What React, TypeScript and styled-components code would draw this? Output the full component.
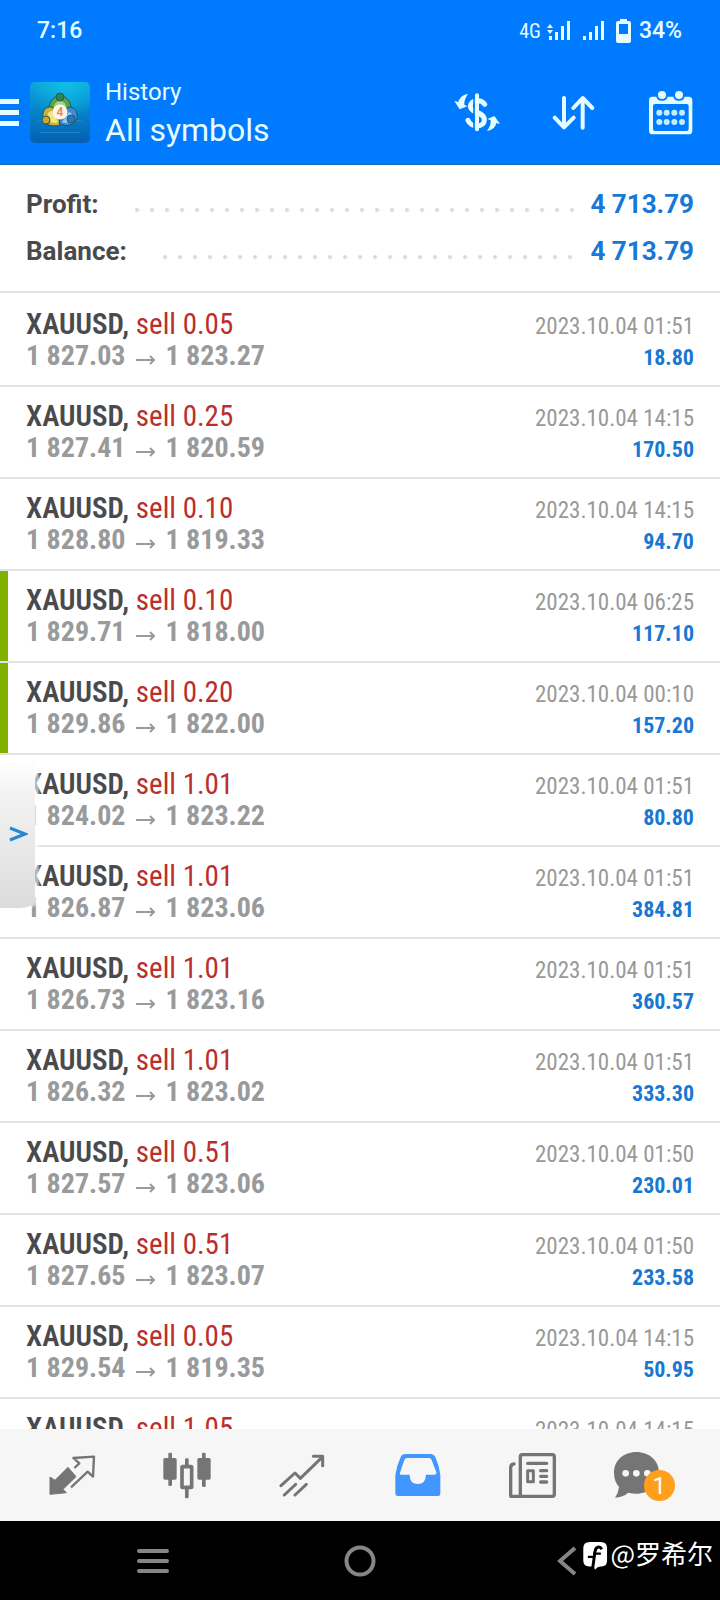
import React from "react";
import styled, { createGlobalStyle } from "styled-components";

const sans = `Roboto, "Liberation Sans", sans-serif`;
const condensed = `"Roboto Condensed", "Liberation Sans Narrow", Roboto, sans-serif`;
const blue = "#007aff";
const ice = "#e6fdff";
const grey = "#757575";

const GlobalStyle = createGlobalStyle`
  * { box-sizing: border-box; }
  html, body { margin: 0; padding: 0; background: #fff; }
  button { border: 0; padding: 0; margin: 0; background: none; color: inherit; font: inherit; cursor: pointer; }
  svg { display: block; }
`;

const Screen = styled.div`
  display: flex;
  flex-direction: column;
  height: 100vh;
  background: #fff;
  font-family: ${sans};
`;

const Top = styled.header`
  flex: none;
  background: ${blue};
  color: ${ice};
  border-bottom: 1px solid #1a67b8;
`;

const StatusBar = styled.div`
  display: flex;
  align-items: center;
  justify-content: space-between;
  height: 60px;
  padding: 2px 38px 0 37px;
  font-size: 23px;
  line-height: 28px;
  font-weight: 500;
`;

const StatusGroup = styled.div`
  display: flex;
  align-items: center;
`;

const Network = styled.span`
  font-family: ${condensed};
  font-size: 20px;
  line-height: 24px;
  font-weight: 400;
  margin-right: 6px;
`;

const StatusIcon = styled.svg<{ $gap: number }>`
  fill: currentColor;
  margin-right: ${(p) => p.$gap}px;
`;

const AppBar = styled.div`
  display: flex;
  align-items: center;
  height: 104px;
  padding-right: 1px;
`;

const MenuButton = styled.button`
  width: 19px;
  margin-right: 11px;
`;

const Titles = styled.div`
  flex: 1;
  display: flex;
  flex-direction: column;
  gap: 4px;
  margin-left: 15px;
`;

const Overline = styled.div`
  font-size: 24px;
  line-height: 32px;
`;

const Title = styled.h1`
  margin: 0;
  font-size: 32px;
  line-height: 36px;
  font-weight: 400;
`;

const ActionButton = styled.button`
  display: flex;
  align-items: center;
  justify-content: center;
  width: 97px;
  height: 72px;
`;

const Summary = styled.dl`
  flex: none;
  display: flex;
  flex-direction: column;
  gap: 15px;
  margin: 0;
  padding: 23px 26px 24px;
  border-bottom: 2px solid #e2e2e2;
  font-size: 26px;
  line-height: 32px;
  font-weight: 700;
`;

const SummaryRow = styled.div`
  display: flex;
`;

const SummaryLabel = styled.dt`
  color: #4a4a4c;
`;

const Leader = styled.span`
  flex: 1;
  margin: 0 12px 0 36px;
  background: radial-gradient(circle at 2px 2px, #d8d8d8 1px, rgba(216, 216, 216, 0) 3px) 0 20px / 15px 5px repeat-x;
`;

const SummaryValue = styled.dd`
  margin: 0;
  color: #1778d8;
`;

const HistoryPane = styled.main`
  position: relative;
  flex: 1;
  min-height: 0;
  overflow: hidden;
`;

const DealList = styled.ul`
  height: 100%;
  margin: 0;
  padding: 2px 0 0;
  list-style: none;
  overflow-y: auto;
  scrollbar-width: none;
  font-family: ${condensed};
`;

const Deal = styled.li<{ $marked?: boolean }>`
  height: 92px;
  padding: 13px 26px 0;
  border-bottom: 2px solid #e2e2e2;
  background: ${(p) => (p.$marked ? "linear-gradient(#80b000, #80b000) 0 0 / 8px 100% no-repeat" : "none")};
`;

const DealLine = styled.div`
  display: flex;
  align-items: baseline;
  justify-content: space-between;
  height: 32px;
  font-size: 29px;
  line-height: 32px;
`;

const Symbol = styled.span`
  color: #4a4a4c;
  font-weight: 600;
`;

const Side = styled.span`
  color: #b92f2d;
  font-weight: 400;
`;

const Prices = styled.span`
  display: flex;
  align-items: baseline;
  color: #999a9c;
  font-size: 28px;
  font-weight: 700;
`;

const Arrow = styled.svg`
  width: 20px;
  height: 10px;
  margin: 0 10px;
`;

const When = styled.time`
  color: #999;
  font-size: 23px;
  line-height: 28px;
`;

const Profit = styled.span`
  color: #1778d4;
  font-size: 22px;
  line-height: 28px;
  font-weight: 700;
`;

const Drawer = styled.button`
  position: absolute;
  left: 0;
  top: 467px;
  width: 35px;
  height: 148px;
  display: flex;
  align-items: center;
  padding-left: 9px;
  border-radius: 0 0 16px 0 / 0 0 6px 0;
  background: linear-gradient(#fff, #f4f4f4 20%, #dcdcde);
  box-shadow: 4px 0 2px rgba(255, 255, 255, 0.6);
`;

const TabBar = styled.nav`
  flex: none;
  display: flex;
  height: 92px;
  padding: 0 14px;
  background: #f6f6f6;
`;

const Tab = styled.button<{ $active?: boolean }>`
  flex: 1;
  display: flex;
  align-items: center;
  justify-content: center;
  color: ${(p) => (p.$active ? "#4296ff" : grey)};
`;

const ChatIcon = styled.span`
  position: relative;
  width: 69px;
  height: 48px;
`;

const Badge = styled.span`
  position: absolute;
  left: 30px;
  top: 19px;
  width: 31px;
  height: 31px;
  border-radius: 50%;
  background: #ff9f1c;
  color: #fff;
  font-size: 24px;
  line-height: 32px;
  text-align: center;
`;

const SystemBar = styled.footer`
  position: relative;
  flex: none;
  display: flex;
  height: 79px;
  padding: 0 50px;
  background: #000;
  color: #868686;
`;

const SystemButton = styled.button`
  flex: 1;
  display: flex;
  align-items: center;
  justify-content: center;
`;

const Watermark = styled.div`
  position: absolute;
  right: 7px;
  top: 14px;
  display: flex;
  align-items: center;
  gap: 2px;
  color: #fff;
  font-family: "Noto Sans CJK SC", sans-serif;
  font-size: 26px;
  line-height: 36px;

  svg {
    margin-top: 6px;
  }
`;

type DealData = {
  volume: string;
  open: string;
  close: string;
  time: string;
  profit: string;
  marked?: boolean;
};

const deals: DealData[] = [
  { volume: "0.05", open: "1 827.03", close: "1 823.27", time: "2023.10.04 01:51", profit: "18.80" },
  { volume: "0.25", open: "1 827.41", close: "1 820.59", time: "2023.10.04 14:15", profit: "170.50" },
  { volume: "0.10", open: "1 828.80", close: "1 819.33", time: "2023.10.04 14:15", profit: "94.70" },
  { volume: "0.10", open: "1 829.71", close: "1 818.00", time: "2023.10.04 06:25", profit: "117.10", marked: true },
  { volume: "0.20", open: "1 829.86", close: "1 822.00", time: "2023.10.04 00:10", profit: "157.20", marked: true },
  { volume: "1.01", open: "1 824.02", close: "1 823.22", time: "2023.10.04 01:51", profit: "80.80" },
  { volume: "1.01", open: "1 826.87", close: "1 823.06", time: "2023.10.04 01:51", profit: "384.81" },
  { volume: "1.01", open: "1 826.73", close: "1 823.16", time: "2023.10.04 01:51", profit: "360.57" },
  { volume: "1.01", open: "1 826.32", close: "1 823.02", time: "2023.10.04 01:51", profit: "333.30" },
  { volume: "0.51", open: "1 827.57", close: "1 823.06", time: "2023.10.04 01:50", profit: "230.01" },
  { volume: "0.51", open: "1 827.65", close: "1 823.07", time: "2023.10.04 01:50", profit: "233.58" },
  { volume: "0.05", open: "1 829.54", close: "1 819.35", time: "2023.10.04 14:15", profit: "50.95" },
];

const lastDeal = { volume: "1.05", time: "2023.10.04 14:15" };

const Logo = () => (
  <svg width="60" height="61" viewBox="0 0 60 61">
    <defs>
      <linearGradient id="sky" x1="0" y1="0" x2="0" y2="1">
        <stop offset="0" stopColor="#0aa6dc" />
        <stop offset="0.45" stopColor="#0586cb" />
        <stop offset="1" stopColor="#0560b2" />
      </linearGradient>
      <radialGradient id="glow" cx="0.6" cy="0" r="0.6">
        <stop offset="0" stopColor="#12bfe6" />
        <stop offset="1" stopColor="#12bfe6" stopOpacity="0" />
      </radialGradient>
    </defs>
    <rect width="60" height="61" rx="5" fill="url(#sky)" />
    <rect width="60" height="61" rx="5" fill="url(#glow)" />
    <path d="M10 50.500H50M8 38.500H52" stroke="#2c8fd0" strokeWidth="1" opacity="0.6" />
    <g stroke="#24556a" strokeWidth="1">
      <path d="M19 27C19 18 25 14 30 14S41 18 41 27L36 31H24Z" fill="#57a548" />
      <path d="M24 26C24 21 27 19 30 19S36 21 36 26" fill="#a5d978" stroke="none" />
      <path d="M22 25C14 24 12 31 13 36S20 46 30 43L29 35Z" fill="#c9b23a" />
      <path d="M22 29C17 29 17 35 19 38S25 42 28 40" fill="#f3e480" stroke="none" />
      <path d="M38 25C46 25 48 31 47 36S38 47 29 41L32 34Z" fill="#3e8cd0" />
      <path d="M39 30C43 31 43 35 41 38S35 42 32 40" fill="#8cc8f0" stroke="none" />
      <circle cx="30" cy="15" r="4" fill="#2f8840" />
      <circle cx="16" cy="38" r="4" fill="#d0a628" />
      <circle cx="41" cy="37" r="4" fill="#2a78c0" />
    </g>
    <circle cx="30" cy="30" r="7.500" fill="#fff5ec" />
    <text x="30" y="34" textAnchor="middle" fontFamily="Roboto, sans-serif" fontSize="12" fontWeight="700" fill="#ef8a4c">4</text>
  </svg>
);

const DollarIcon = () => (
  <svg width="48" height="41" viewBox="280 276 144 123" fill="none">
    <path d="M375 313C366 298 332 298 332 319C332 340 374 334 374 359C374 384 334 384 325 361" stroke={ice} strokeWidth="15" strokeLinecap="round" />
    <path d="M343 290V386" stroke={blue} strokeWidth="5" />
    <path d="M352 286V388" stroke={ice} strokeWidth="12" strokeLinecap="round" />
    <path d="M284 303L300 328L323 319L314 314C313 303 318 291 325 282C309 284 299 294 296 306Z" fill={ice} />
    <path d="M421 372L404 348L383 357L393 361C394 373 389 384 382 393C398 390 408 381 410 369Z" fill={ice} />
  </svg>
);

const SortIcon = () => (
  <svg width="45" height="37" viewBox="576 281 135 111" fill="none" stroke={ice} strokeWidth="12" strokeLinecap="round" strokeLinejoin="round">
    <path d="M615 293V380M587 352L615 381L644 352" />
    <path d="M671 382V294M643 323L671 293L700 323" />
  </svg>
);

const CalendarIcon = () => (
  <svg width="47" height="47" viewBox="861 264 141 141">
    <path fillRule="evenodd" fill={ice} d="M877 287H986Q997 287 997 298V389Q997 400 986 400H877Q867 400 867 389V298Q867 287 877 287ZM885 309Q879 309 879 315V384Q879 390 885 390H980Q986 390 986 384V315Q986 309 980 309Z" />
    {[906, 957].map((x) => (
      <g key={x}>
        <path d={`M${x - 17} 284Q${x - 17} 299 ${x} 299T${x + 17} 284Z`} fill={blue} />
        <circle cx={x} cy="282" r="12" fill={ice} />
      </g>
    ))}
    {[898, 920, 943, 966].map((x) => (
      <g key={x} fill="#c4ecff">
        <circle cx={x} cy="335" r="9" />
        <circle cx={x} cy="363" r="9" />
      </g>
    ))}
  </svg>
);

const TradeIcon = () => (
  <svg width="48" height="42" viewBox="145 253 144 126">
    <path fill={grey} stroke={grey} strokeWidth="3" strokeLinejoin="round" d="M151 322L151 374L200 369L190 359L229 321L205 293L166 332Z" />
    <path fill="none" stroke={grey} strokeWidth="7" strokeLinejoin="round" d="M224 295L239 281L221 265L283 261L280 321L264 306L214 353" />
  </svg>
);

const CandlesIcon = () => (
  <svg width="50" height="47" viewBox="488 243 150 141" fill={grey}>
    <rect x="492" y="261" width="40" height="65" rx="5" />
    <rect x="507" y="245" width="11" height="100" rx="4" />
    <rect x="594" y="261" width="40" height="65" rx="5" />
    <rect x="608" y="245" width="11" height="103" rx="4" />
    <rect x="557" y="262" width="11" height="120" rx="4" />
    <rect x="548" y="287" width="29" height="62" rx="2" fill="#f6f6f6" stroke={grey} strokeWidth="11" />
  </svg>
);

const ChartIcon = () => (
  <svg width="46" height="43" viewBox="838 247 138 129" fill="none" stroke={grey} strokeWidth="9" strokeLinecap="round" strokeLinejoin="round">
    <path d="M844 342L886 304L902 320L967 257M941 254H969V282M854 370L888 338M886 370L920 338" />
  </svg>
);

const InboxIcon = () => (
  <svg width="48" height="44" viewBox="101 246 144 132" fill="currentColor" fillRule="evenodd">
    <path d="M105 312Q110 282 121 258Q125 249 136 249H210Q220 249 225 258Q236 282 240 312V368Q240 375 233 375H112Q105 375 105 368ZM119 305L132 267Q134 261 140 261H206Q212 261 214 267L228 304Q229 311 222 311H197Q196 339 172 339Q148 339 148 311H124Q117 311 119 305Z" />
  </svg>
);

const NewsIcon = () => (
  <svg width="49" height="47" viewBox="446 241 147 141" fill="none" stroke={grey} strokeLinecap="round" strokeLinejoin="round">
    <rect x="483" y="249" width="102" height="125" rx="6" strokeWidth="10" />
    <path d="M464 277Q454 278 454 288V374H482" strokeWidth="10" />
    <path d="M505 275H562M544 297H562M544 314H562M544 331H562" strokeWidth="10" />
    <path d="M505 297H522V330H505Z" strokeWidth="9" />
  </svg>
);

const SignalIcon = ({ data, gap }: { data?: boolean; gap: number }) => (
  <StatusIcon $gap={gap} width={data ? 24 : 22} height="20" viewBox={data ? "0 0 24 20" : "2 0 22 20"}>
    <path d="M2 15H5V19H2ZM8 11H11V19H8ZM14 5H17V19H14ZM20 0H23V19H20Z" />
    {data && <path d="M3 3L6 7H0ZM3 13L0 9H6Z" />}
  </StatusIcon>
);

export default function App() {
  return (
    <Screen>
      <GlobalStyle />
      <Top>
        <StatusBar>
          <span>7:16</span>
          <StatusGroup>
            <Network>4G</Network>
            <SignalIcon data gap={12} />
            <SignalIcon gap={11} />
            <StatusIcon $gap={8} width="15" height="24" viewBox="0 0 15 24" fillRule="evenodd">
              <path d="M4 0H11V2H13Q15 2 15 4V22Q15 24 13 24H2Q0 24 0 22V4Q0 2 2 2H4ZM3 5V15H12V5Z" />
            </StatusIcon>
            <span>34%</span>
          </StatusGroup>
        </StatusBar>
        <AppBar>
          <MenuButton aria-label="Menu">
            <svg width="19" height="27" viewBox="0 0 19 27" fill={ice}>
              <path d="M0 0H19V5H0ZM0 11H19V16H0ZM0 22H19V27H0Z" />
            </svg>
          </MenuButton>
          <Logo />
          <Titles>
            <Overline>History</Overline>
            <Title>All symbols</Title>
          </Titles>
          <ActionButton aria-label="Currency"><DollarIcon /></ActionButton>
          <ActionButton aria-label="Sort"><SortIcon /></ActionButton>
          <ActionButton aria-label="Period"><CalendarIcon /></ActionButton>
        </AppBar>
      </Top>

      <Summary>
        {["Profit:", "Balance:"].map((label) => (
          <SummaryRow key={label}>
            <SummaryLabel>{label}</SummaryLabel>
            <Leader />
            <SummaryValue>4 713.79</SummaryValue>
          </SummaryRow>
        ))}
      </Summary>

      <HistoryPane>
        <DealList>
          {deals.map((d, i) => (
            <Deal key={i} $marked={d.marked}>
              <DealLine>
                <span><Symbol>XAUUSD,</Symbol> <Side>sell {d.volume}</Side></span>
                <When>{d.time}</When>
              </DealLine>
              <DealLine>
                <Prices>
                  {d.open}
                  <Arrow viewBox="0 0 20 10" fill="none" stroke="#999a9c" strokeWidth="2">
                    <path d="M0 5H18M14 1L18 5L14 9" />
                  </Arrow>
                  {d.close}
                </Prices>
                <Profit>{d.profit}</Profit>
              </DealLine>
            </Deal>
          ))}
          <Deal>
            <DealLine>
              <span><Symbol>XAUUSD,</Symbol> <Side>sell {lastDeal.volume}</Side></span>
              <When>{lastDeal.time}</When>
            </DealLine>
          </Deal>
        </DealList>
        <Drawer aria-label="Open panel">
          <svg width="19" height="16" viewBox="0 0 19 16" fill="none" stroke="#2489d0" strokeWidth="3">
            <path d="M1 2L16 8L1 14" />
          </svg>
        </Drawer>
      </HistoryPane>

      <TabBar>
        <Tab aria-label="Quotes"><TradeIcon /></Tab>
        <Tab aria-label="Charts"><CandlesIcon /></Tab>
        <Tab aria-label="Trade"><ChartIcon /></Tab>
        <Tab aria-label="History" $active><InboxIcon /></Tab>
        <Tab aria-label="News"><NewsIcon /></Tab>
        <Tab aria-label="Messages">
          <ChatIcon>
            <svg width="46" height="48" viewBox="761 241 138 144">
              <path fill={grey} d="M828 244C866 244 896 270 896 306S866 369 828 369Q815 369 804 366Q788 380 764 381Q774 368 776 349Q761 331 761 306C761 270 790 244 828 244Z" />
              <g fill="#f6f6f6">
                <circle cx="796" cy="308" r="10" />
                <circle cx="828" cy="308" r="10" />
                <circle cx="861" cy="308" r="10" />
              </g>
            </svg>
            <Badge>1</Badge>
          </ChatIcon>
        </Tab>
      </TabBar>

      <SystemBar>
        <SystemButton aria-label="Recent apps">
          <svg width="32" height="26" viewBox="0 0 32 26" stroke="currentColor" strokeWidth="4" strokeLinecap="round">
            <path d="M2 3H30M2 13H30M2 23H30" />
          </svg>
        </SystemButton>
        <SystemButton aria-label="Home">
          <svg width="32" height="32" viewBox="0 0 32 32" fill="none" stroke="currentColor" strokeWidth="4">
            <circle cx="16" cy="16" r="13.500" />
          </svg>
        </SystemButton>
        <SystemButton aria-label="Back">
          <svg width="20" height="30" viewBox="0 0 20 30" fill="none" stroke="currentColor" strokeWidth="4">
            <path d="M18 2L3 15L18 28" />
          </svg>
        </SystemButton>
        <Watermark>
          <svg width="25" height="28" viewBox="672 519 75 86">
            <path fill="#fff" d="M692 519H726Q745 519 745 538V576Q745 594 728 594H724Q716 594 708 604Q705 594 702 594H690Q672 594 672 576V538Q672 519 692 519Z" />
            <path fill="none" stroke="#000" strokeWidth="9" d="M729 541C722 530 710 534 708 548L701 598" />
            <path fill="none" stroke="#000" strokeWidth="7" d="M686 565H702M702 555H726" />
          </svg>
          <span>@罗希尔</span>
        </Watermark>
      </SystemBar>
    </Screen>
  );
}
